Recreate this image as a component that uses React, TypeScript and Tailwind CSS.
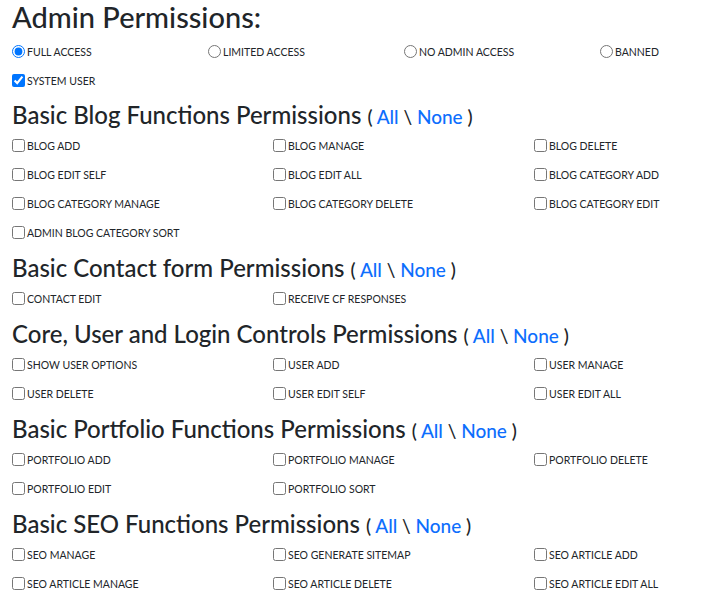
import React from 'react';

// ---- data ----
type Section = { title: string; perms: string[] };

const SECTIONS: Section[] = [
  {
    title: 'Basic Blog Functions Permissions',
    perms: [
      'Blog Add', 'Blog Manage', 'Blog Delete',
      'Blog Edit Self', 'Blog Edit All', 'Blog Category Add',
      'Blog Category Manage', 'Blog Category Delete', 'Blog Category Edit',
      'Admin Blog Category Sort',
    ],
  },
  {
    title: 'Basic Contact form Permissions',
    perms: ['Contact Edit', 'Receive CF Responses'],
  },
  {
    title: 'Core, User and Login Controls Permissions',
    perms: ['Show User Options', 'User Add', 'User Manage', 'User Delete', 'User Edit Self', 'User Edit All'],
  },
  {
    title: 'Basic Portfolio Functions Permissions',
    perms: ['Portfolio Add', 'Portfolio Manage', 'Portfolio Delete', 'Portfolio Edit', 'Portfolio Sort'],
  },
  {
    title: 'Basic SEO Functions Permissions',
    perms: [
      'SEO Manage', 'SEO Generate Sitemap', 'SEO Article Add',
      'SEO Article Manage', 'SEO Article Delete', 'SEO Article Edit All',
    ],
  },
];

const ACCESS = ['Full Access', 'Limited Access', 'No Admin Access', 'Banned'];

// ---- pieces ----
function Check({ label, type = 'checkbox', checked = false, name }: {
  label: string; type?: 'checkbox' | 'radio'; checked?: boolean; name?: string;
}) {
  return (
    <label className="flex items-center h-[29px] pt-[6px] text-[10.5px] uppercase text-[#212529] whitespace-nowrap">
      <input type={type} name={name} defaultChecked={checked} className="w-[13px] h-[13px] m-0 mr-[2px] -mt-[3px]" />
      <span>{label}</span>
    </label>
  );
}

function SectionBlock({ section }: { section: Section }) {
  return (
    <div>
      <h3 className="mt-[7px] h-[30px] text-[24px] leading-[29px] font-medium text-[#212529] whitespace-nowrap">
        {section.title}{' '}
        <span className="text-[19px] leading-none">
          ( <a href="#" className="text-[#0d6efd]">All</a> \ <a href="#" className="text-[#0d6efd]">None</a> )
        </span>
      </h3>
      <div className="grid grid-cols-[261px_261px_261px]">
        {section.perms.map((p) => <Check key={p} label={p} />)}
      </div>
    </div>
  );
}

export default function App() {
  return (
    <div className="w-[711px] h-[601px] overflow-hidden bg-white" style={{ fontFamily: 'Lato, "Open Sans", sans-serif' }}>
      <div className="px-3 w-[820px]">
        <h2 className="h-[35.5px] pb-[1.5px] text-[29px] leading-[34px] font-medium text-[#212529]">Admin Permissions:</h2>
        <div className="grid grid-cols-[196px_196px_196px_196px]">
          {ACCESS.map((a, i) => <Check key={a} type="radio" name="access" label={a} checked={i === 0} />)}
        </div>
        <Check label="System User" checked />
        {SECTIONS.map((s, i) => (
          <div key={s.title} className={i === 0 ? '-mt-px' : ''}>
            <SectionBlock section={s} />
          </div>
        ))}
      </div>
    </div>
  );
}
